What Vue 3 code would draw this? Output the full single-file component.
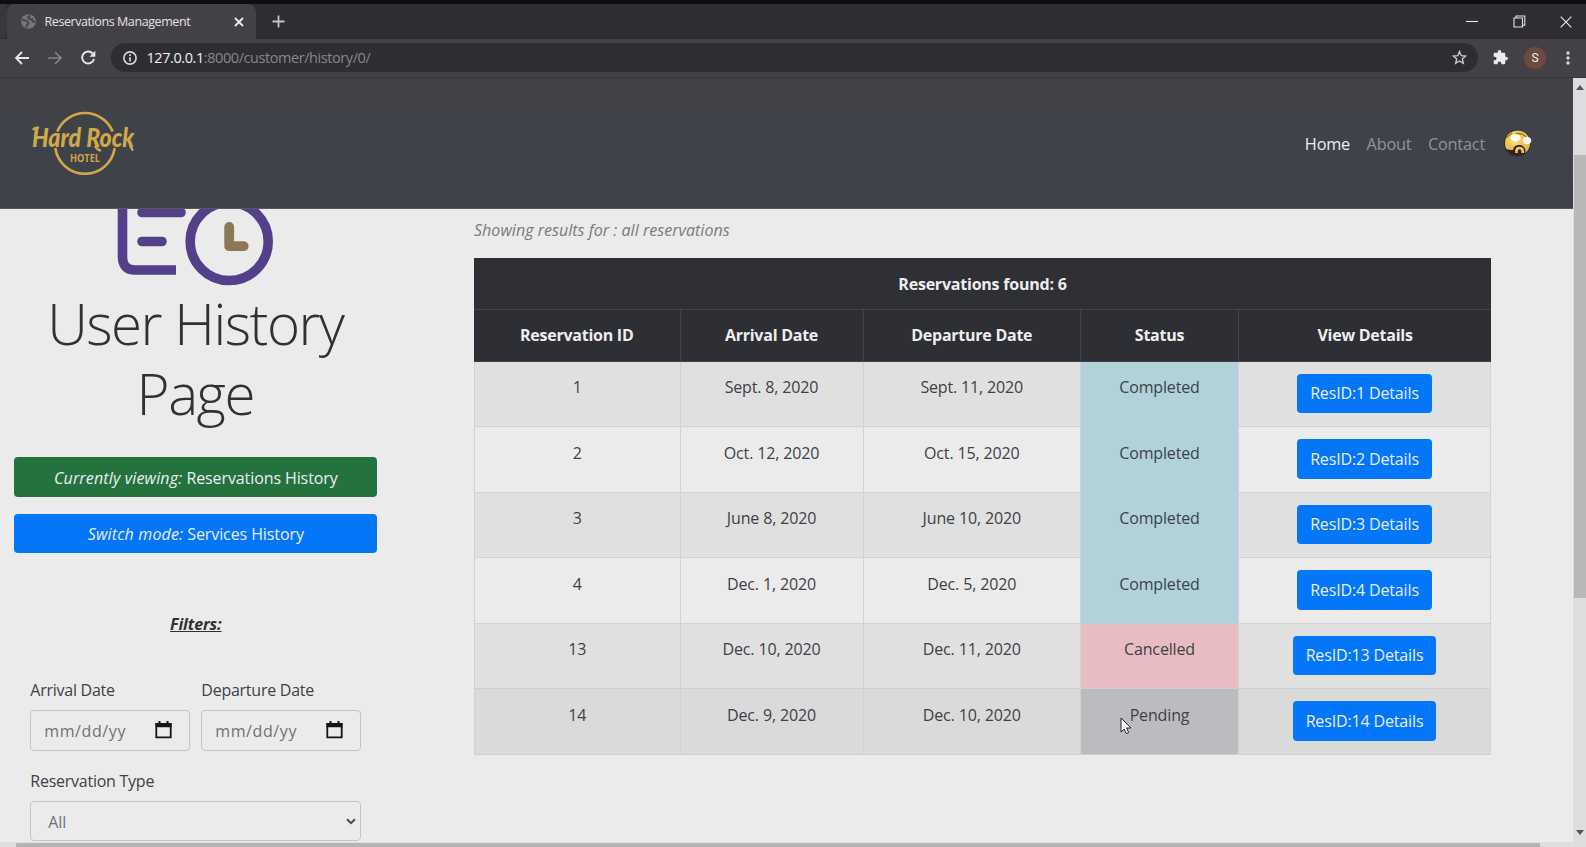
<script setup>
const columns = [
  { key: 'id', label: 'Reservation ID' },
  { key: 'arrival', label: 'Arrival Date' },
  { key: 'departure', label: 'Departure Date' },
  { key: 'status', label: 'Status' },
  { key: 'view', label: 'View Details' }
]
const reservations = [
  { id: 1, arrival: 'Sept. 8, 2020', departure: 'Sept. 11, 2020', status: 'Completed' },
  { id: 2, arrival: 'Oct. 12, 2020', departure: 'Oct. 15, 2020', status: 'Completed' },
  { id: 3, arrival: 'June 8, 2020', departure: 'June 10, 2020', status: 'Completed' },
  { id: 4, arrival: 'Dec. 1, 2020', departure: 'Dec. 5, 2020', status: 'Completed' },
  { id: 13, arrival: 'Dec. 10, 2020', departure: 'Dec. 11, 2020', status: 'Cancelled' },
  { id: 14, arrival: 'Dec. 9, 2020', departure: 'Dec. 10, 2020', status: 'Pending' }
]
const dateFilters = ['Arrival Date', 'Departure Date']
</script>

<template>
  <div class="window">
    <header class="chrome">
      <div class="tabstrip">
        <div class="prev-tab"></div>
        <div class="tab">
          <svg class="globe" width="15" height="15" viewBox="0 0 15 15">
            <circle cx="7.5" cy="7.5" r="7.3" fill="#77777b" />
            <path d="M1 5.5 6 7l1.500 2.500L6 11l-.5 2.500M9.500 1.200 7 3.500l1 1.500 3 .2.5 2.300 2.500.5" fill="none" stroke="#47464b" stroke-width="2" />
          </svg>
          <span class="tab-title">Reservations Management</span>
          <svg class="tab-close" width="10" height="10" viewBox="0 0 10 10"><path d="m1 1 8 8M9 1 1 9" stroke="#eee" stroke-width="1.800" /></svg>
        </div>
        <svg class="plus" width="13" height="13" viewBox="0 0 13 13"><path d="M6.500.500v12M.500 6.500h12" stroke="#c5c4c8" stroke-width="1.800" /></svg>
        <div class="win-controls">
          <svg width="12" height="14" viewBox="0 0 12 14"><path d="M0 6.500h12" stroke="#eee" stroke-width="1.100" /></svg>
          <svg width="13" height="13" viewBox="0 0 13 13"><path d="M1 3h8.500v9H1zM3 3V1h8.800v9.300H9.500" fill="none" stroke="#e4e3e6" stroke-width="1.100" /></svg>
          <svg width="12" height="12" viewBox="0 0 12 12"><path d="m.7.7 10.600 10.600M11.300.7.7 11.300" stroke="#eee" stroke-width="1.100" /></svg>
        </div>
      </div>
      <div class="toolbar">
        <svg class="tool" width="14" height="14" viewBox="0 0 14 14"><path d="M14 7H1.500M7 1 1 7l6 6" fill="none" stroke="#e8e7ea" stroke-width="1.900" /></svg>
        <svg class="tool" width="14" height="14" viewBox="0 0 14 14"><path d="M0 7h12.500M7 1l6 6-6 6" fill="none" stroke="#838287" stroke-width="1.700" /></svg>
        <svg class="tool reload" width="15" height="15" viewBox="0 0 15 15">
          <path d="M13 9a6 6 0 1 1-1.300-5.500" fill="none" stroke="#e8e7ea" stroke-width="1.900" />
          <path d="M14.300.8v6H8.500z" fill="#e8e7ea" />
        </svg>
        <div class="omnibox">
          <svg width="14" height="14" viewBox="0 0 14 14">
            <circle cx="7" cy="7" r="6.100" fill="none" stroke="#d8d7da" stroke-width="1.600" />
            <path d="M7 6.200v4.200M7 3.300v1.700" stroke="#d8d7da" stroke-width="1.700" />
          </svg>
          <span class="url"><b>127.0.0.1</b>:8000/customer/history/0/</span>
          <svg class="star" width="15" height="15" viewBox="0 0 15 15"><path d="m7.500 1.600 1.700 4.100 4.400.4-3.300 2.900 1 4.300-3.800-2.300-3.800 2.300 1-4.300L1.400 6.100l4.400-.4z" fill="none" stroke="#c9c8cb" stroke-width="1.400" /></svg>
        </div>
        <svg class="puzzle" width="15" height="15" viewBox="1 1 22 22"><path fill="#eceaee" d="M20.500 11H19V7a2 2 0 0 0-2-2h-4V3.500a2.500 2.500 0 0 0-5 0V5H4a2 2 0 0 0-2 2v3.800h1.500a2.700 2.700 0 0 1 0 5.400H2V20a2 2 0 0 0 2 2h3.800v-1.500a2.700 2.700 0 0 1 5.400 0V22H17a2 2 0 0 0 2-2v-4h1.500a2.500 2.500 0 0 0 0-5z" /></svg>
        <span class="profile">S</span>
        <svg class="kebab" width="4" height="14" viewBox="0 0 4 14"><circle cx="2" cy="2" r="1.700" /><circle cx="2" cy="7" r="1.700" /><circle cx="2" cy="12" r="1.700" /></svg>
      </div>
    </header>

    <div class="viewport">
      <div class="page">
        <nav class="navbar">
          <svg class="brand" width="108" height="66" viewBox="0 0 108 66">
            <path d="M27.300 19.500a30 30 0 0 1 55.400 0M25.300 36a30 30 0 0 0 59.400 0" fill="none" stroke="#d0a84a" stroke-width="2.600" />
            <text x="2" y="34.500" class="brand-name" textLength="102" lengthAdjust="spacingAndGlyphs">Hard Rock</text>
            <path d="M3 18q1.500-3 6-2.200M65 34q3 5 6 4M100 33q1.500 4 3 5.500" fill="none" stroke="#d0a84a" stroke-width="2.400" />
            <text x="40" y="50" class="brand-sub" textLength="30" lengthAdjust="spacingAndGlyphs">HOTEL</text>
          </svg>
          <div class="links">
            <span class="active">Home</span><span>About</span><span>Contact</span>
          </div>
          <svg class="avatar" width="30" height="30" viewBox="0 0 30 30">
            <defs>
              <radialGradient id="face" cx=".4" cy=".35" r=".7"><stop offset="0" stop-color="#fff0a0" /><stop offset=".4" stop-color="#ecc75c" /><stop offset="1" stop-color="#dcb24c" /></radialGradient>
              <clipPath id="head"><circle cx="14.500" cy="15" r="13" /></clipPath>
            </defs>
            <circle cx="14.500" cy="15" r="13.500" fill="#2c2824" />
            <circle cx="14.500" cy="15" r="12.600" fill="url(#face)" />
            <path clip-path="url(#head)" d="M0 19q4 3.500 10 3 .5-5 6.500-5 4.500 0 6 5.500l-1 7H0z" fill="#38211c" />
            <path d="M13.500 25v-2q0-3 3-3t3.200 3v2" fill="none" stroke="#ebc961" stroke-width="2.600" />
            <path d="M3 10 9 5M12.500 6q8-2 12 5" stroke="#70552b" stroke-width="1" fill="none" />
            <ellipse cx="12.500" cy="9.800" rx="5" ry="3.500" fill="#fffbea" />
            <ellipse cx="24" cy="12.500" rx="4.200" ry="3.800" fill="#f5f5ee" />
          </svg>
        </nav>

        <main class="content">
          <aside class="sidebar">
            <svg class="history-icon" width="158" height="77" viewBox="0 0 158 77">
              <path d="M5.500-1v48.500Q5.500 61 18 61h41" fill="none" stroke="#543f8b" stroke-width="9.600" />
              <path d="M25 3.500h39M25 32.500h20" stroke="#543f8b" stroke-width="9.600" stroke-linecap="round" />
              <circle cx="112.200" cy="32.500" r="39" fill="none" stroke="#543f8b" stroke-width="9.600" />
              <path d="M112.200 18v19.200h14.500" fill="none" stroke="#8b7955" stroke-width="9.800" stroke-linecap="round" stroke-linejoin="round" />
            </svg>
            <h1><span>User History</span><br />Page</h1>
            <button class="mode current"><i>Currently viewing:</i> Reservations History</button>
            <button class="mode switch"><i>Switch mode:</i> Services History</button>
            <h2>Filters:</h2>
            <form class="filters">
              <div class="dates">
                <div v-for="name in dateFilters" :key="name" class="field">
                  <label>{{ name }}</label>
                  <div class="control">
                    <span>mm/dd/yy</span>
                    <svg width="17" height="18" viewBox="0 0 17 18"><path d="M1.300 3h14.400v13.300H1.300z" fill="none" stroke="#151515" stroke-width="1.800" /><path d="M.5 2h16v4.300H.5zM3.500 0h2v3h-2zM11.500 0h2v3h-2z" fill="#151515" /></svg>
                  </div>
                </div>
              </div>
              <div class="field type">
                <label>Reservation Type</label>
                <div class="control">
                  <span>All</span>
                  <svg width="10" height="7" viewBox="0 0 10 7"><path d="m1 1.200 4 4 4-4" fill="none" stroke="#4a4a4a" stroke-width="2" /></svg>
                </div>
              </div>
            </form>
          </aside>

          <section class="results">
            <p class="summary">Showing results for : all reservations</p>
            <div class="table">
              <div class="caption">Reservations found: {{ reservations.length }}</div>
              <div class="row head">
                <div v-for="c in columns" :key="c.key" class="cell">{{ c.label }}</div>
              </div>
              <div v-for="r in reservations" :key="r.id" class="row" :class="{ hovered: r.status === 'Pending' }">
                <div class="cell">{{ r.id }}</div>
                <div class="cell">{{ r.arrival }}</div>
                <div class="cell">{{ r.departure }}</div>
                <div class="cell status" :class="r.status.toLowerCase()">{{ r.status }}</div>
                <div class="cell action"><button>ResID:{{ r.id }} Details</button></div>
              </div>
            </div>
          </section>
        </main>
        <div class="hscroll"><div class="hthumb"></div></div>
      </div>
      <div class="vscroll">
        <svg width="8" height="5" viewBox="0 0 8 5"><path d="m0 5 4-5 4 5z" fill="#555" /></svg>
        <div class="vthumb"></div>
        <svg class="down" width="8" height="5" viewBox="0 0 8 5"><path d="m0 0 4 5 4-5z" fill="#555" /></svg>
      </div>
    </div>
    <svg class="pointer" width="12" height="18" viewBox="0 0 12 18"><path d="M1 1v14l3.200-3 2.200 4.600 2.300-1L6.600 11H11z" fill="#fff" stroke="#222" stroke-width="1" /></svg>
  </div>
</template>

<style>
body { overflow: hidden; background: #ebebeb; }
</style>

<style scoped>
* { box-sizing: border-box; }
svg { display: block; flex: none; }
.window { position: relative; width: 1586px; height: 847px; overflow: hidden; display: flex; flex-direction: column; font-family: "Open Sans", "Noto Sans", sans-serif; font-size: 16px; color: #3e4146; letter-spacing: -0.15px; }
button { font: inherit; letter-spacing: inherit; border: 0; color: #eceef5; padding: 0; }
.chrome { height: 78px; flex: none; border-top: 4px solid #0e0e0e; background: #434146; border-bottom: 1px solid #38363b; }
.tabstrip { height: 35px; display: flex; background: #2f2d32; align-items: center; }
.prev-tab { width: 7px; height: 35px; background: #38373a; border-bottom-right-radius: 6px; }
.tab { width: 249px; height: 35px; background: #434146; border-radius: 8px 8px 0 0; display: flex; align-items: center; padding-left: 13.500px; }
.tab-title { margin-left: 9px; font-size: 12.500px; color: #e4e2e6; letter-spacing: -0.42px; width: 150px; white-space: nowrap; }
.tab-close { margin-left: 39px; }
.plus { margin-left: 16px; }
.win-controls { margin-left: auto; display: flex; align-items: center; gap: 34.500px; padding-right: 14px; }
.toolbar { height: 38px; display: flex; align-items: center; padding: 0 0 1px 15px; }
.tool { margin-right: 19px; }
.reload { margin-right: 15px; }
.omnibox { width: 1367px; height: 29px; border-radius: 15px; background: #2e2d31; display: flex; align-items: center; padding: 0 11px 0 11.500px; }
.url { font-size: 14.500px; color: #88878b; margin-left: 10px; letter-spacing: -0.43px; }
.url b { font-weight: 400; color: #f0eff2; }
.star { margin-left: auto; }
.puzzle { margin-left: 15px; }
.profile { width: 22px; height: 22px; border-radius: 50%; background: #6c4a40; color: #eee; font: 12px/22px Roboto, sans-serif; text-align: center; margin-left: 16px; }
.kebab { margin-left: 20px; fill: #d9d8db; }
.viewport { flex: 1; display: flex; min-height: 0; }
.page { width: 1573px; display: flex; flex-direction: column; background: #ebebeb; }
.navbar { height: 131px; flex: none; background: linear-gradient(#414246, #3f4249 45%, #3e4148); border-bottom: 1px solid #555960; display: flex; align-items: center; padding: 0 40px 0 30px; }
.brand { overflow: visible; margin-top: 3px; }
.brand-name { font: italic 900 26.500px Lato, sans-serif; fill: #d0a84a; letter-spacing: 0; }
.brand-sub { font: 700 10px "Open Sans", sans-serif; fill: #d0a84a; letter-spacing: 0; }
.links { margin: 2px 0 0 auto; display: flex; gap: 16.500px; color: #929397; font-size: 16.300px; letter-spacing: -0.2px; }
.links .active { color: #eeeeef; letter-spacing: -0.2px; }
.avatar { margin-left: 18px; }
.content { flex: 1; display: flex; min-height: 0; overflow: hidden; }
.sidebar { width: 392px; padding-left: 14.300px; display: flex; flex-direction: column; }
.history-icon { margin-left: 103px; }
h1 { margin: 3px 0 0; width: 362px; height: 139px; text-align: center; font-weight: 300; font-size: 56.500px; line-height: 69.500px; color: #303133; letter-spacing: -1.5px; white-space: nowrap; }
.mode { width: 363px; height: 39.500px; border-radius: 4px; flex: none; letter-spacing: -0.1px; padding-top: 1px; }
.mode i { letter-spacing: 0.15px; }
.current { margin-top: 29px; background: #24733f; padding-top: 2px; }
.switch { margin-top: 17px; background: #0477f8; height: 39px; }
h2 { width: 363px; margin: 59px 0 0; font-size: 16px; line-height: 24px; text-align: center; font-style: italic; text-decoration: underline; color: #2f3034; letter-spacing: -0.1px; }
.filters { width: 331px; margin: 42px 0 0 16px; }
.dates { display: flex; gap: 11px; }
.dates .field { width: 160px; }
label { display: block; height: 32px; line-height: 24px; letter-spacing: -0.25px; }
.control { height: 41.500px; border: 1px solid #c4c4c6; border-radius: 4px; display: flex; align-items: center; justify-content: space-between; padding: 2px 17px 0 13px; color: #707176; }
.dates .control span { letter-spacing: 0.6px; }
.dates .control svg { margin-top: -2px; }
.type { margin-top: 17.500px; }
.type .control { height: 40px; padding: 2px 4px 0 17px; }
.results { width: 1017px; margin-left: 82px; }
.summary { margin: 9px 0 0; height: 40px; line-height: 24px; font-style: italic; color: #797a7e; letter-spacing: 0.03px; }
.table { border-left: 1px solid #d2d2d4; border-right: 1px solid #d2d2d4; }
.caption { height: 51.500px; margin: 0 -1px; background: #2f3035; color: #eeedf0; font-weight: 700; text-align: center; line-height: 53px; border-bottom: 1px solid #424449; letter-spacing: -0.22px; }
.row { height: 65.500px; display: grid; grid-template-columns: 205.500px 183px 217.500px 158px 1fr; background: #e0e0e1; border-bottom: 1px solid #d2d2d4; }
.row:nth-child(even) { background: #ebebec; }
.row.hovered { background: #dadadb; }
.row.head { height: 52px; margin: 0 -1px; background: #2e2f34; color: #eeedf0; font-weight: 700; border-bottom-color: #3e4045; letter-spacing: -0.25px; grid-template-columns: 206.500px 183px 217.500px 158px 1fr; }
.cell { text-align: center; padding-top: 13.500px; line-height: 24px; border-right: 1px solid #d2d2d4; }
.cell:last-child { border-right: 0; }
.head .cell { border-right-color: #414348; }
.row.hovered, .row:nth-child(7) { border-bottom-color: #cfcfd1; }
.completed { background: #b1d2d9; margin-bottom: -1px; }
.cancelled { background: #e8bcc0; }
.pending { background: #bcbcc0; }
.action { padding-top: 12.300px; }
.action button { height: 39.300px; padding: 0 12.800px; border-radius: 4px; background: #0477f8; }
.hscroll { height: 5px; flex: none; background: #dedede; padding: 1px 33px 0 16px; }
.hthumb { height: 4px; background: #b4b4b4; }
.vscroll { width: 13px; background: #dddddf; display: flex; flex-direction: column; align-items: center; padding: 7px 0 12px; }
.vthumb { width: 12px; height: 443px; margin-top: 65px; background: #b8b8b9; align-self: flex-end; }
.down { margin-top: auto; }
.pointer { position: absolute; left: 1120px; top: 717px; }
</style>
